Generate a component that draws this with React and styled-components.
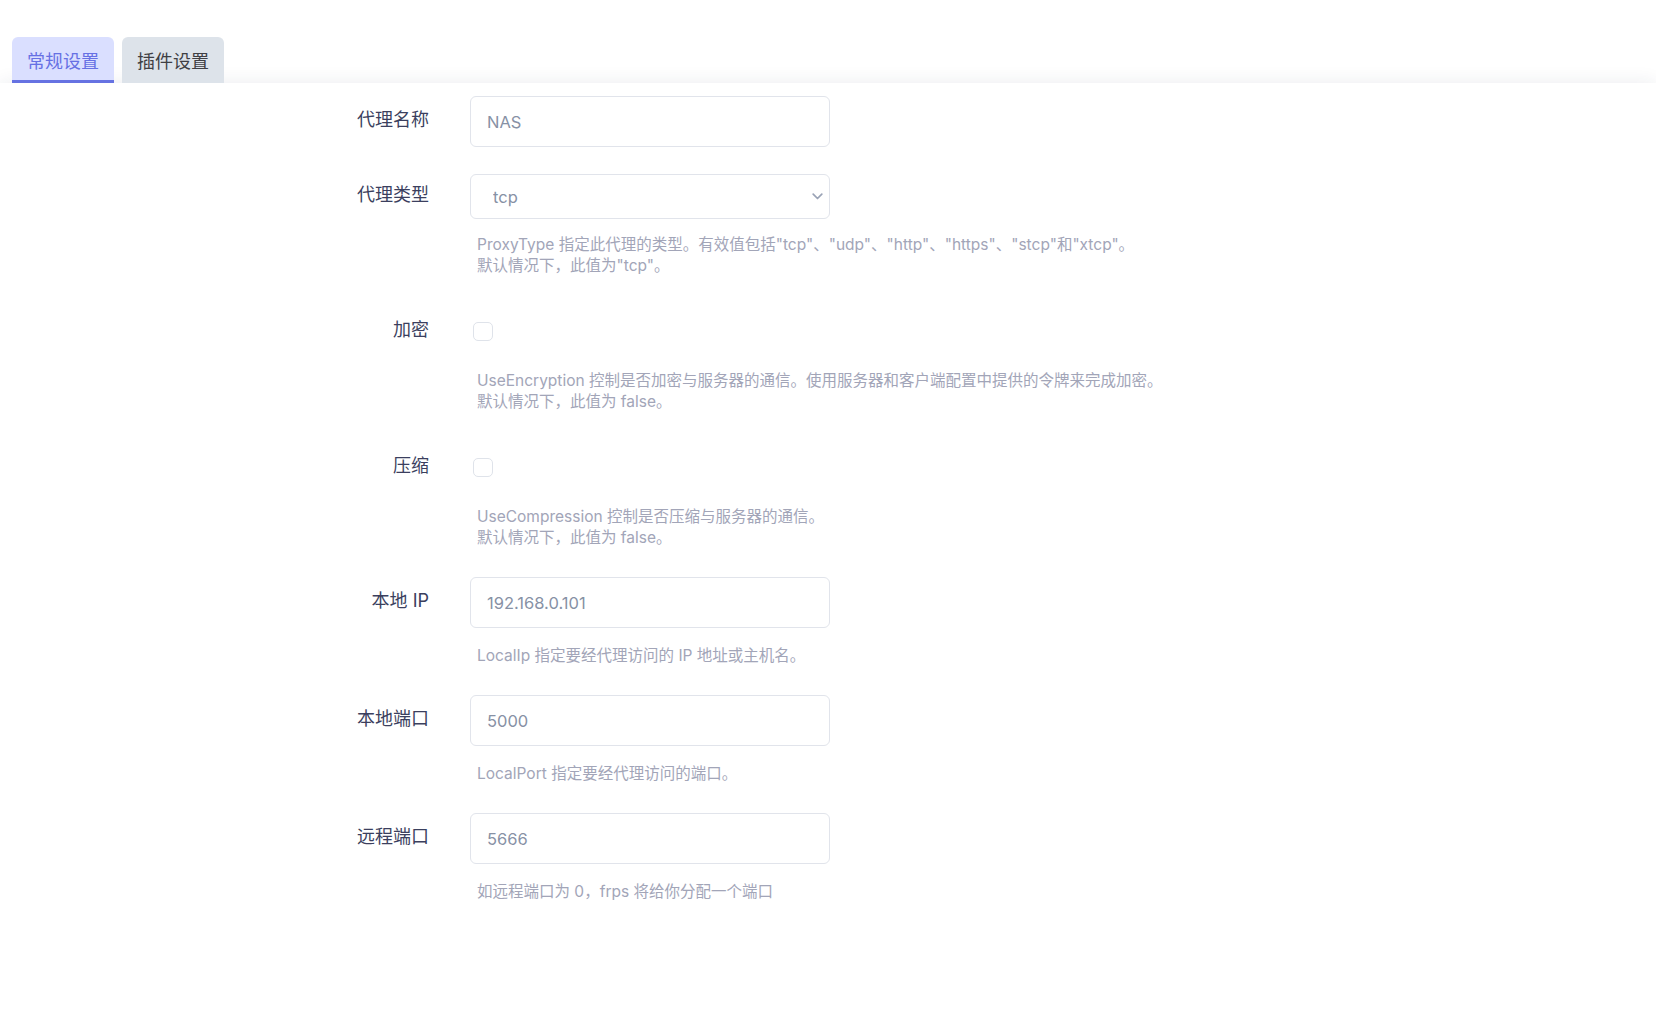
import React, { useState } from 'react'
import styled, { createGlobalStyle } from 'styled-components'

const GlobalStyle = createGlobalStyle`
  * { box-sizing: border-box; }
  body {
    margin: 0;
    background: #fff;
    font-family: "Inter", "Noto Sans CJK SC", "Noto Sans", sans-serif;
  }
`

const tabs = ['常规设置', '插件设置']

const fields = [
    { key: 'name', label: '代理名称', type: 'input', value: 'NAS' },
    {
        key: 'type', label: '代理类型', type: 'select', value: 'tcp',
        help: ['ProxyType 指定此代理的类型。有效值包括"tcp"、"udp"、"http"、"https"、"stcp"和"xtcp"。', '默认情况下，此值为"tcp"。'],
    },
    {
        key: 'enc', label: '加密', type: 'check',
        help: ['UseEncryption 控制是否加密与服务器的通信。使用服务器和客户端配置中提供的令牌来完成加密。', '默认情况下，此值为 false。'],
    },
    {
        key: 'comp', label: '压缩', type: 'check',
        help: ['UseCompression 控制是否压缩与服务器的通信。', '默认情况下，此值为 false。'],
    },
    { key: 'ip', label: '本地 IP', type: 'input', value: '192.168.0.101', help: ['LocalIp 指定要经代理访问的 IP 地址或主机名。'] },
    { key: 'port', label: '本地端口', type: 'input', value: '5000', help: ['LocalPort 指定要经代理访问的端口。'] },
    { key: 'remote', label: '远程端口', type: 'input', value: '5666', help: ['如远程端口为 0，frps 将给你分配一个端口'] },
]

// space between a control and its help text
const helpGap = { check: 13, select: 15, input: 17 }

function App() {
    const [active, setActive] = useState(0)

    return (
        <Page>
            <GlobalStyle />
            <TabBar>
                {tabs.map((t, i) => (
                    <Tab key={t} $active={i === active} onClick={() => setActive(i)}>{t}</Tab>
                ))}
            </TabBar>
            <Card>
                {fields.map((f) => (
                    <Group key={f.key}>
                        <Row $check={f.type === 'check'}>
                            <Label>{f.label}</Label>
                            {f.type === 'input' && <Input defaultValue={f.value} />}
                            {f.type === 'select' && (
                                <SelectWrap>
                                    <Select defaultValue={f.value}>
                                        {['tcp', 'udp', 'http', 'https', 'stcp', 'xtcp'].map((o) => <option key={o}>{o}</option>)}
                                    </Select>
                                    <Chevron width="11" height="7" viewBox="0 0 11 7">
                                        <path d="M1.2 1.2 L5.5 5.5 L9.8 1.2" fill="none" stroke="#9aa3b6" strokeWidth="1.7" strokeLinecap="round" strokeLinejoin="round" />
                                    </Chevron>
                                </SelectWrap>
                            )}
                            {f.type === 'check' && <Check type="checkbox" />}
                        </Row>
                        {f.help && (
                            <Help $gap={helpGap[f.type]}>
                                {f.help.map((line) => <div key={line}>{line}</div>)}
                            </Help>
                        )}
                    </Group>
                ))}
            </Card>
        </Page>
    )
}

export default App

const Page = styled.div`
padding-top: 37px;
`

const TabBar = styled.div`
display: flex;
gap: 8px;
padding-left: 12px;
position: relative;
z-index: 1;
`

const Tab = styled.div`
width: 102px;
height: 46px;
display: flex;
align-items: center;
justify-content: center;
font-size: 18px;
border-radius: 6px 6px 0 0;
cursor: pointer;
background: ${(p) => (p.$active ? '#dadfff' : '#dde3ea')};
color: ${(p) => (p.$active ? '#6670e4' : '#3f3f44')};
box-shadow: ${(p) => (p.$active ? 'inset 0 -3px 0 #6672e2' : 'none')};
`

const Card = styled.div`
background: #fff;
box-shadow: 0 0 18px rgba(30, 45, 80, 0.09);
padding: 13px 0 19px;
`

const Group = styled.div`
margin-bottom: 29px;

&:first-child {
  margin-bottom: 27px;
}

&:last-child {
  margin-bottom: 0;
}
`

const Row = styled.div`
display: grid;
grid-template-columns: 429px 360px;
column-gap: 41px;
align-items: center;
min-height: ${(p) => (p.$check ? '52px' : '0')};
`

const Label = styled.label`
text-align: right;
font-size: 18px;
color: #3b3f5e;
line-height: 26px;
margin-top: -3px;
`

const Input = styled.input`
height: 51px;
width: 360px;
border: 1px solid #e1e4eb;
border-radius: 6px;
padding: 0 16px;
font-family: inherit;
font-size: 16.5px;
color: #8791a5;
outline: none;
background: #fff;
`

const SelectWrap = styled.div`
position: relative;
width: 360px;
`

const Select = styled.select`
appearance: none;
width: 100%;
height: 45px;
border: 1px solid #e1e4eb;
border-radius: 6px;
padding: 0 22px;
font-family: inherit;
font-size: 16.5px;
color: #8791a5;
background: #fff;
outline: none;
`

const Chevron = styled.svg`
position: absolute;
right: 7px;
top: 19px;
pointer-events: none;
`

const Check = styled.input`
appearance: none;
margin: 0 0 0 3px;
width: 20px;
height: 19px;
border: 1px solid #dfe3ea;
border-radius: 5px;
background: #fff;
`

const Help = styled.div`
margin-top: ${(p) => p.$gap}px;
padding-left: 477px;
font-size: 15.5px;
line-height: 21px;
color: #a2a5b8;
`
